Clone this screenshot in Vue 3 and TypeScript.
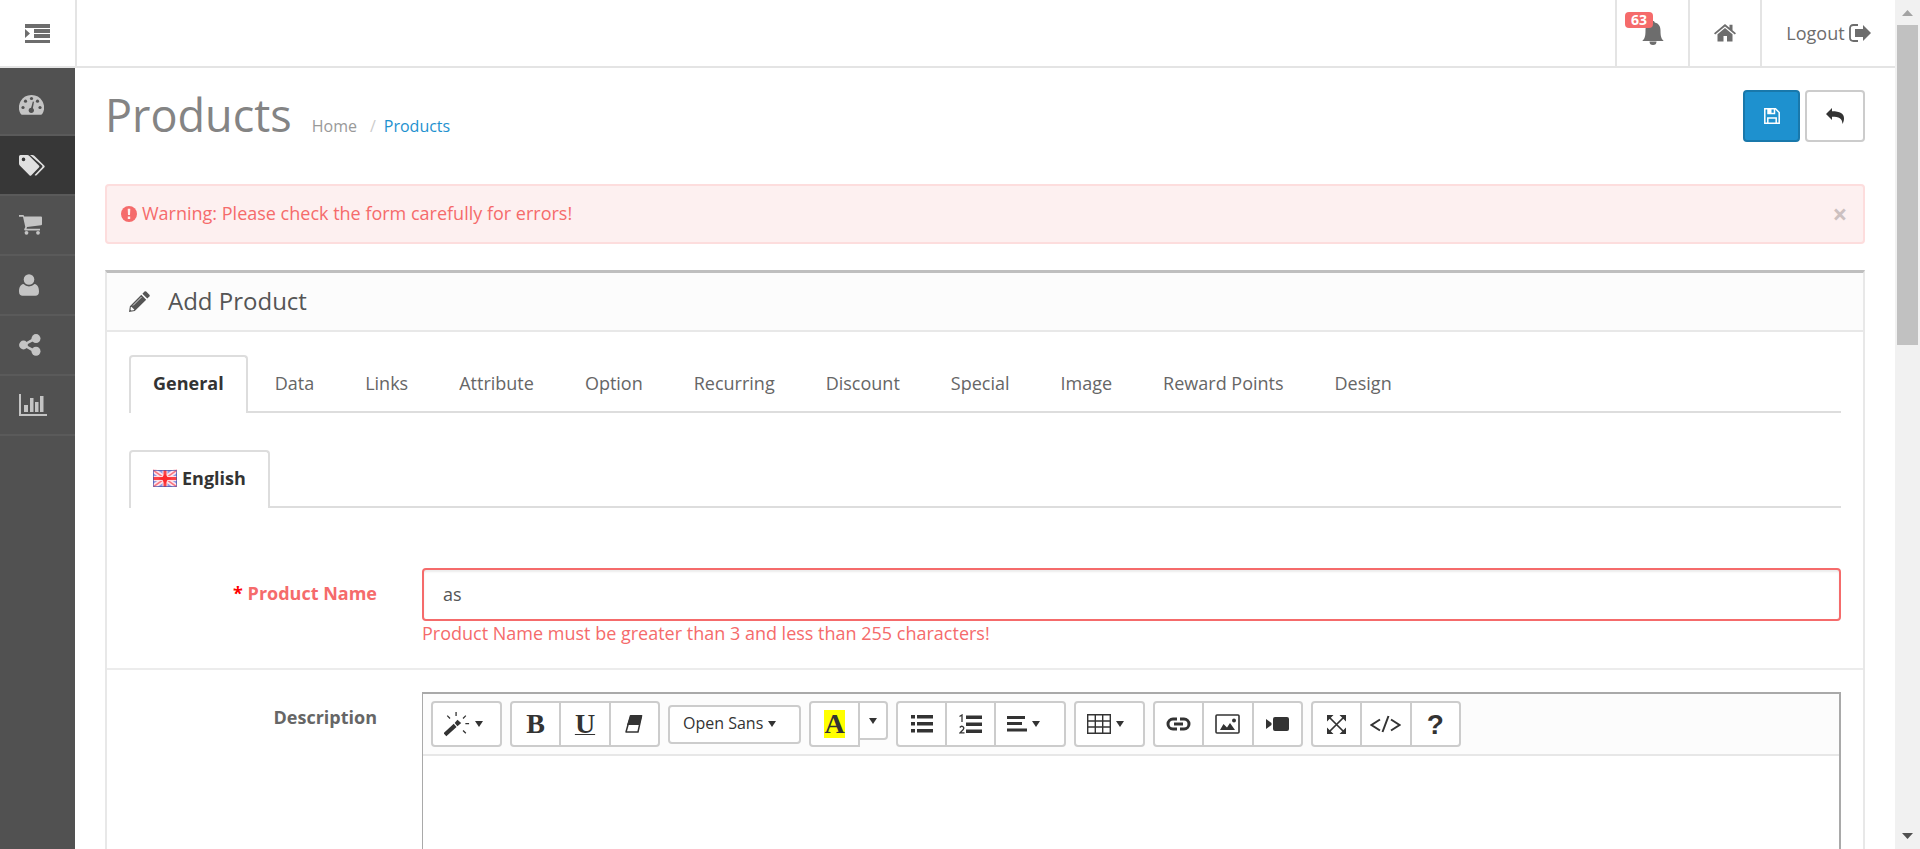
<script setup lang="ts">
import { ref } from 'vue'

interface NavItem { label: string; icon: string }

const nav: NavItem[] = [
  { label: 'Dashboard', icon: 'dashboard' },
  { label: 'Catalog', icon: 'tags' },
  { label: 'Sales', icon: 'cart' },
  { label: 'Customers', icon: 'user' },
  { label: 'Marketing', icon: 'share' },
  { label: 'Reports', icon: 'chart' },
]
const activeNav = ref('Catalog')
const tabs: string[] = ['General', 'Data', 'Links', 'Attribute', 'Option', 'Recurring', 'Discount', 'Special', 'Image', 'Reward Points', 'Design']
const activeTab = ref('General')
const productName = ref('as')
const showAlert = ref(true)
</script>

<template>
  <div class="app">
    <div class="page">
      <header class="topbar">
        <button class="menu-toggle" type="button" aria-label="Toggle menu">
          <svg width="25" height="20" viewBox="0 0 25 20" fill="currentColor"><path d="M0 1h25v4H0zM9 6h16v4H9zM9 11h16v4H9zM0 17h25v3H0zM0 6l5 4.500-5 4.500z" /></svg>
        </button>
        <nav class="top-links" aria-label="Account">
          <a class="top-link bell" href="#" aria-label="Notifications">
            <svg width="24" height="24" viewBox="0 0 24 24" fill="currentColor"><path d="M12 0c1 0 1.700.7 1.700 1.600C18 2.500 19.500 6 19.500 9.500c0 6 .8 8 3.200 10.500H1.300c2.400-2.500 3.200-4.500 3.200-10.500C4.500 6 6 2.500 10.300 1.600 10.300.7 11 0 12 0zM8.500 20.500h7a3.500 3.500 0 0 1-7 0z" /></svg>
            <span class="badge">63</span>
          </a>
          <a class="top-link home" href="#" aria-label="Store front">
            <svg width="22" height="18" viewBox="0 0 22 18" fill="currentColor"><path d="M11 0 0 9.200l1.200 1.400L11 2.500l9.800 8.100L22 9.200l-3.500-3V.7h-3v3zM11 4 3.500 10.200V17.500h6v-5.500h3.500v5.500h5.500v-7.300z" /></svg>
          </a>
          <a class="top-link logout" href="#">Logout
            <svg width="22" height="18" viewBox="0 0 22 18"><path d="M9 1H4.500Q1 1 1 4.500v9Q1 17 4.500 17H9" fill="none" stroke="currentColor" stroke-width="1.800" /><path d="M14 1l8 8-8 8v-4H6V5h8z" fill="currentColor" /></svg>
          </a>
        </nav>
      </header>

      <div class="layout">
        <nav class="sidebar" aria-label="Main">
          <a v-for="item in nav" :key="item.label" href="#" class="nav-item" :class="{ active: item.label === activeNav }" :aria-label="item.label" @click.prevent="activeNav = item.label">
            <svg v-if="item.icon === 'dashboard'" width="25" height="20" viewBox="0 0 25 20"><path fill="currentColor" d="M12.500 0A12.500 12.500 0 0 0 1.800 19q.4.700 1.200.700h19q.8 0 1.200-.700A12.500 12.500 0 0 0 12.500 0z" /><g class="cut"><circle cx="12.500" cy="3.500" r="1.600" /><circle cx="6.500" cy="6.200" r="1.600" /><circle cx="18.500" cy="6.200" r="1.600" /><circle cx="4" cy="12.500" r="1.600" /><circle cx="21" cy="12.500" r="1.600" /><circle cx="12.300" cy="15.300" r="2.600" /><path d="M13.800 6.500l1.200.3-1.400 8h-2z" /></g></svg>
            <svg v-else-if="item.icon === 'tags'" width="26" height="21" viewBox="0 0 26 21"><path fill="currentColor" fill-rule="evenodd" d="M0 1.500Q0 0 1.500 0h6.700q1.300 0 2.200 1l9.500 9.500q1 1 0 2l-7.500 7.700q-1 1-2 0L1 10.700Q0 9.700 0 8.400zM4.500 2.600a1.800 1.800 0 1 0 0 3.600 1.800 1.800 0 0 0 0-3.600z" /><path fill="currentColor" d="M11 0h2.300q1.200 0 2 .8l9.900 9.700q1 1 0 2l-7.600 7.700q-1 .9-2-.2l7.200-7.500q1.200-1 0-2.200z" /></svg>
            <svg v-else-if="item.icon === 'cart'" width="23" height="20" viewBox="0 0 23 20" fill="currentColor"><path d="M0 0h4.200q.8 0 1 1.500H22q1 0 1 1v6.800q0 .8-1 1L8 12l-.5 1.700H21v1.700H6q-1-.2-.8-1.200L6.300 12 4 1.800H0z" /><circle cx="7.500" cy="17.800" r="1.900" /><circle cx="19" cy="17.800" r="1.900" /></svg>
            <svg v-else-if="item.icon === 'user'" width="20" height="22" viewBox="0 0 20 22" fill="currentColor"><circle cx="10" cy="5.500" r="5.300" /><path d="M4.500 10a7.500 7.500 0 0 0 11 0c3.500.5 4.500 4 4.500 7.500 0 3-1.500 4.200-3.500 4.200h-13C1.500 21.700 0 20.500 0 17.500 0 14 1 10.500 4.500 10z" /></svg>
            <svg v-else-if="item.icon === 'share'" width="22" height="22" viewBox="0 0 22 22" fill="currentColor"><path d="M4 10l12-7 1 2.700L7 11l10 5.300-1 2.700L4 12z" /><circle cx="4.500" cy="11" r="4.400" /><circle cx="17" cy="4.600" r="4.500" /><circle cx="17" cy="17.200" r="4.500" /></svg>
            <svg v-else width="28" height="22" viewBox="0 0 28 22" fill="currentColor"><path d="M0 0h2v20h26v2H0zM5 11h4v7H5zM11 4h3.500v14H11zM16 8h3.500v10H16zM21 2h3.500v16H21z" /></svg>
          </a>
        </nav>

        <main class="content">
          <div class="page-header">
            <h1>Products</h1>
            <ol class="breadcrumb">
              <li><a href="#">Home</a></li>
              <li><a href="#" class="current">Products</a></li>
            </ol>
            <div class="actions">
              <button class="btn primary" type="button" aria-label="Save">
                <svg width="16" height="16" viewBox="0 0 16 16" fill="none" stroke="currentColor" stroke-width="1.500"><path d="M.8.800h10.700l3.700 3.700v10.700H.8zM3.800 15v-5h8.400v5" /><path d="M4 1v4.500h6.500V1" /><path d="M4 1h3.500v4H4z" fill="currentColor" stroke="none" /></svg>
              </button>
              <button class="btn" type="button" aria-label="Back">
                <svg width="18" height="16" viewBox="0 0 18 16" fill="currentColor"><path d="M0 6 6 0v3.300c8 0 12 2 12 7.200 0 2-.6 3.700-1.500 5.500C16.300 10.500 13 8.700 6 8.700V12z" /></svg>
              </button>
            </div>
          </div>

          <div v-if="showAlert" class="alert" role="alert">
            <svg width="16" height="16" viewBox="0 0 16 16"><circle cx="8" cy="8" r="8" fill="currentColor" /><path d="M6.700 2.800h2.600L9 9H7zM6.800 10.500h2.400V13H6.800z" fill="#fdf0f0" /></svg>
            <span class="alert-text">Warning: Please check the form carefully for errors!</span>
            <button class="close" type="button" aria-label="Close" @click="showAlert = false">×</button>
          </div>

          <section class="panel">
            <div class="panel-heading">
              <svg width="21" height="21" viewBox="0 0 21 21" fill="currentColor"><path d="M15.500.6q.8-.9 1.700 0l3.200 3.200q.8.900 0 1.700L18.300 7.600 13.400 2.700zM12.300 3.800l4.900 4.900L5.800 20.100 0 21l.9-5.800z" /><path d="M2.400 15.700l2.900 2.900-.7.700-2.300.3-.8-.8.300-2.400z" fill="#fcfcfc" /><path d="M4 14.500l8.500-8.500" stroke="#fcfcfc" stroke-width=".8" /></svg>
              <h3>Add Product</h3>
            </div>
            <form class="panel-body" @submit.prevent>
              <div class="tabs" role="tablist">
                <button v-for="tab in tabs" :key="tab" type="button" role="tab" class="tab" :class="{ active: tab === activeTab }" :aria-selected="tab === activeTab" @click="activeTab = tab">{{ tab }}</button>
              </div>
              <div class="tabs languages" role="tablist">
                <button type="button" role="tab" class="tab active" aria-selected="true">
                  <svg width="24" height="18" viewBox="0 0 24 18"><path fill="#8f9ae4" d="M0 1h24v17H0z" /><path d="M0 1l24 17M24 1L0 18" stroke="#fde4ea" stroke-width="5" /><path d="M0 1l24 17M24 1L0 18" stroke="#f9737f" stroke-width="1.500" /><path d="M12 1v17M0 9.500h24" stroke="#fde0e6" stroke-width="5" /><path d="M12 1v17M0 9.500h24" stroke="#fb4347" stroke-width="3" /><path d="M12 5l2.500 3 4 1.500-4 1.500-2.500 4-2.500-4-4-1.500 4-1.500z" fill="#fb2a2e" /><path d="M.5 1.500h23v16H.5z" fill="none" stroke="#4a51a5" stroke-opacity=".7" /></svg>
                  English
                </button>
              </div>

              <div class="form-row">
                <label class="label error" for="product-name"><span class="required">*</span> Product Name</label>
                <div class="field">
                  <input id="product-name" v-model="productName" type="text" />
                  <div class="help">Product Name must be greater than 3 and less than 255 characters!</div>
                </div>
              </div>

              <div class="form-row description">
                <label class="label" for="product-description">Description</label>
                <div class="editor">
                  <div class="toolbar" role="toolbar" aria-label="Formatting">
                    <div class="group menu">
                      <button type="button" aria-label="Style">
                        <svg width="26" height="26" viewBox="0 0 28 26"><path d="M1 24.500 12 14.500" stroke="currentColor" stroke-width="4.500" /><path d="M14.500 8.500l4 3.500-4 3.500-3-3.500z" fill="currentColor" /><path d="M3.500 4l3 3M13 0v4.500M23.500 4l-3 3M23 12.500h4M20.500 20l3 3" stroke="currentColor" stroke-width="1.400" /></svg>
                        <i class="caret"></i>
                      </button>
                    </div>
                    <div class="group triple">
                      <button type="button" aria-label="Bold"><b class="glyph">B</b></button>
                      <button type="button" aria-label="Underline"><span class="glyph underlined">U</span></button>
                      <button type="button" aria-label="Remove formatting">
                        <svg width="18" height="18" viewBox="0 0 18 18"><path d="M5.500.800h11L13 17H1z" fill="none" stroke="currentColor" stroke-width="1.500" stroke-linejoin="round" /><path d="M5.500.500h11.800L14.500 10H2z" fill="currentColor" /></svg>
                      </button>
                    </div>
                    <div class="group font">
                      <button type="button">Open Sans <i class="caret"></i></button>
                    </div>
                    <div class="color-group">
                      <button type="button" class="color" aria-label="Recent color"><span class="glyph swatch">A</span></button>
                      <button type="button" class="more" aria-label="More colors"><i class="caret"></i></button>
                    </div>
                    <div class="group lists">
                      <button type="button" aria-label="Unordered list">
                        <svg width="22" height="18" viewBox="0 0 22 18" fill="currentColor"><path d="M0 0h4v3.500H0zM6 0h16v3.500H6zM0 7h4v3.500H0zM6 7h16v3.500H6zM0 14h4v3.500H0zM6 14h16v3.500H6z" /></svg>
                      </button>
                      <button type="button" aria-label="Ordered list">
                        <svg width="23" height="20" viewBox="0 0 23 20"><path d="M7 1.500h16V5H7zM7 8.500h16V12H7zM7 15.500h16V19H7z" fill="currentColor" /><path d="M.5 2.500 3 1v7M.8 13.500q1.500-2 3.200-.8t-.2 3.300L1 18.800h4.500" fill="none" stroke="currentColor" stroke-width="1.300" /></svg>
                      </button>
                      <button type="button" class="with-caret" aria-label="Paragraph">
                        <svg width="20" height="16" viewBox="0 0 20 16" fill="currentColor"><path d="M0 0h18v3H0zM0 6h15v3H0zM0 12.500h20v3H0z" /></svg>
                        <i class="caret"></i>
                      </button>
                    </div>
                    <div class="group menu">
                      <button type="button" aria-label="Table">
                        <svg width="24" height="20" viewBox="0 0 24 20" fill="none" stroke="currentColor" stroke-width="1.400"><path d="M.7.700h22.600v18.600H.7zM8.300 1v18M15.700 1v18M1 7h22M1 13h22" /></svg>
                        <i class="caret"></i>
                      </button>
                    </div>
                    <div class="group triple">
                      <button type="button" aria-label="Link">
                        <svg width="25" height="14" viewBox="0 0 25 14" fill="none" stroke="currentColor" stroke-width="3"><path d="M11 2H7a5 5 0 0 0 0 10h4M14 2h4a5 5 0 0 1 0 10h-4M8 7h9" /></svg>
                      </button>
                      <button type="button" aria-label="Picture">
                        <svg width="25" height="20" viewBox="0 0 25 20"><rect x="1" y="1" width="23" height="18" rx="1" fill="none" stroke="currentColor" stroke-width="1.600" /><path d="M5 16l3.500-6 3.500 3.500L15 9l5 7z" fill="currentColor" /><circle cx="19" cy="6.500" r="2" fill="currentColor" /></svg>
                      </button>
                      <button type="button" aria-label="Video">
                        <svg width="23" height="14" viewBox="0 0 23 14" fill="currentColor"><path d="M0 2l5.500 4v2L0 12zM9 0h12q2 0 2 2v10q0 2-2 2H9q-2 0-2-2V2q0-2 2-2z" /></svg>
                      </button>
                    </div>
                    <div class="group triple">
                      <button type="button" aria-label="Full screen">
                        <svg width="19" height="19" viewBox="0 0 19 19"><path d="M2 2l15 15M17 2L2 17" stroke="currentColor" stroke-width="1.700" /><path d="M0 0h6.500L0 6.500zM19 0h-6.500L19 6.500zM0 19h6.500L0 12.500zM19 19h-6.500l6.500-6.500z" fill="currentColor" /></svg>
                      </button>
                      <button type="button" aria-label="Code view">
                        <svg width="31" height="18" viewBox="0 0 31 18" fill="none" stroke="currentColor" stroke-width="2"><path d="M10 4.500 1.500 10 10 15.500M21 4.500l8.500 5.500-8.500 5.500M18.500 1l-6 16" /></svg>
                      </button>
                      <button type="button" aria-label="Help"><span class="question">?</span></button>
                    </div>
                  </div>
                  <textarea id="product-description"></textarea>
                </div>
              </div>
            </form>
          </section>
        </main>
      </div>
    </div>
    <div class="scrollbar" aria-hidden="true">
      <svg width="11" height="6" viewBox="0 0 11 6"><path d="M5.500 0 11 6H0z" fill="#a3a3a3" /></svg>
      <div class="track"><div class="thumb"></div></div>
      <svg width="11" height="6" viewBox="0 0 11 6"><path d="M0 0h11L5.500 6z" fill="#505050" /></svg>
    </div>
  </div>
</template>

<style>
body {
  margin: 0;
  overflow: hidden;
}
</style>

<style scoped>
* {
  box-sizing: border-box;
}
.app {
  display: flex;
  height: 100vh;
  overflow: hidden;
  background: #fff;
  color: #666;
  font-family: 'Open Sans', 'Noto Sans', sans-serif;
  font-size: 18px;
  line-height: 25px;
}
svg {
  display: block;
  flex: none;
}
a {
  color: inherit;
  text-decoration: none;
}
button {
  padding: 0;
  border: 0;
  background: none;
  color: inherit;
  font: inherit;
  cursor: pointer;
}
.page {
  display: flex;
  flex: 1;
  flex-direction: column;
  min-width: 0;
}
.topbar {
  display: flex;
  flex: none;
  justify-content: space-between;
  height: 68px;
  border-bottom: 2px solid #e4e4e4;
  color: #6d6d6d;
}
.menu-toggle {
  display: flex;
  align-items: center;
  justify-content: center;
  width: 77px;
  border-right: 2px solid #e4e4e4;
}
.top-links {
  display: flex;
}
.top-link {
  display: flex;
  align-items: center;
  justify-content: center;
  width: 72px;
  border-left: 2px solid #e4e4e4;
}
.top-link.bell {
  position: relative;
  width: 73px;
}
.badge {
  position: absolute;
  top: 12px;
  left: 8px;
  width: 28px;
  border-radius: 4px;
  background: #f56b6b;
  color: #fff;
  font-size: 14px;
  font-weight: 700;
  line-height: 16px;
  text-align: center;
}
.top-link.logout {
  gap: 4px;
  width: 135px;
}
.layout {
  display: flex;
  flex: 1;
  min-height: 0;
}
.sidebar {
  display: flex;
  flex: none;
  flex-direction: column;
  width: 75px;
  padding-top: 8px;
  background: #515151;
  color: #c4c4c4;
}
.nav-item {
  display: flex;
  align-items: center;
  height: 60px;
  padding-left: 19px;
  border-bottom: 2px solid #5a5a5a;
}
.nav-item.active {
  background: #373737;
  color: #e0e0e0;
}
.cut {
  fill: #515151;
}
.content {
  flex: 1;
  min-width: 0;
  padding: 22px 30px 0;
}
.page-header {
  display: flex;
  align-items: baseline;
  height: 52px;
  margin-bottom: 42px;
}
h1,
h3 {
  margin: 0;
  font-weight: 400;
}
h1 {
  color: #848484;
  font-size: 45px;
  line-height: 50px;
}
.breadcrumb {
  display: flex;
  margin: 0 0 0 20px;
  padding: 0;
  color: #999;
  font-size: 16px;
  list-style: none;
}
.breadcrumb li + li::before {
  padding: 0 8px 0 13px;
  color: #ccc;
  content: '/';
}
.current {
  color: #1e91cf;
}
.actions {
  display: flex;
  align-self: flex-start;
  gap: 5px;
  margin-left: auto;
}
.btn {
  display: flex;
  align-items: center;
  justify-content: center;
  width: 60px;
  height: 52px;
  border: 2px solid #ccc;
  border-radius: 4px;
  color: #333;
}
.btn.primary {
  width: 57px;
  border-color: #1978ab;
  background: #1e91cf;
  color: #fff;
}
.alert {
  display: flex;
  align-items: center;
  gap: 5px;
  height: 60px;
  margin-bottom: 26px;
  padding: 0 13px 0 14px;
  border: 2px solid #fddddd;
  border-radius: 4px;
  background: #fdf0f0;
  color: #f56b6b;
}
.alert-text {
  padding-bottom: 2px;
}
.close {
  width: 20px;
  margin-left: auto;
  color: #ccc0c0;
  font-size: 26px;
  font-weight: 700;
}
.panel {
  border: 2px solid #e8e8e8;
  border-top: 3px solid #bfbfbf;
}
.panel-heading {
  display: flex;
  align-items: center;
  gap: 18px;
  height: 59px;
  padding: 0 22px;
  border-bottom: 2px solid #e8e8e8;
  background: #fcfcfc;
  color: #555;
}
.panel-heading h3 {
  padding-bottom: 2px;
  font-size: 24px;
}
.panel-body {
  padding: 23px 22px 0;
}
.tabs {
  display: flex;
  margin-bottom: 37px;
  border-bottom: 2px solid #ddd;
}
.tab {
  display: flex;
  align-items: center;
  gap: 5px;
  height: 56px;
  margin-right: 3px;
  padding: 0 22px 2px;
  border: 2px solid transparent;
  border-bottom: 0;
}
.tab.active {
  height: 58px;
  margin-bottom: -2px;
  padding-bottom: 4px;
  border-color: #ddd;
  border-radius: 4px 4px 0 0;
  background: #fff;
  color: #333;
  font-weight: 700;
}
.languages {
  margin-bottom: 38px;
}
.form-row {
  display: grid;
  grid-template-columns: 248px minmax(0, 1fr);
  column-gap: 45px;
  margin: 0 -22px;
  padding: 22px 22px;
}
.description {
  border-top: 2px solid #ececec;
}
.label {
  padding-top: 13px;
  font-weight: 700;
  text-align: right;
}
.label.error,
.help {
  color: #f56b6b;
}
.required {
  color: #f00;
}
input {
  display: block;
  width: 100%;
  height: 53px;
  padding: 0 19px 2px;
  border: 2px solid #f56b6b;
  border-radius: 4px;
  outline: 0;
  box-shadow: inset 0 2px 2px rgb(0 0 0 / 8%);
  color: #555;
  font: inherit;
}
.editor {
  border: 2px solid #a9a9a9;
  border-left-width: 1px;
}
.toolbar {
  display: flex;
  align-items: flex-start;
  gap: 8px;
  height: 62px;
  padding: 7px 8px;
  border-bottom: 2px solid #e7e7e7;
  background: #fcfcfc;
  color: #333;
}
.group {
  display: flex;
  height: 46px;
  border: 2px solid #ccc;
  border-radius: 4px;
  background: #fff;
}
.group button {
  display: flex;
  flex: 1;
  align-items: center;
  justify-content: center;
  gap: 5px;
}
.group button + button {
  border-left: 2px solid #ccc;
}
.menu {
  width: 71px;
}
.group.menu button {
  justify-content: flex-start;
  padding-left: 11px;
}
.triple {
  width: 150px;
}
.lists {
  width: 170px;
}
.lists .with-caret {
  flex: 0 0 70px;
  justify-content: flex-start;
  padding-left: 11px;
}
.font {
  width: 133px;
  height: 39px;
  margin-top: 4px;
  font-size: 16px;
}
.font button {
  justify-content: flex-start;
  padding: 0 0 2px 13px;
}
.color-group {
  display: flex;
  align-items: flex-start;
}
.color-group button {
  display: flex;
  align-items: center;
  justify-content: center;
  border: 2px solid #ccc;
  background: #fff;
}
.color-group .color {
  width: 51px;
  height: 46px;
  border-radius: 4px 0 0 4px;
}
.color-group .more {
  width: 28px;
  height: 39px;
  border-left: 0;
  border-radius: 0 4px 4px 0;
}
.caret {
  width: 0;
  height: 0;
  border: 4px solid transparent;
  border-top: 6px solid #333;
  border-bottom: 0;
}
.glyph {
  font-family: 'Liberation Serif', serif;
  font-size: 28px;
  font-weight: 700;
  line-height: 28px;
}
.underlined {
  text-decoration: underline;
  text-decoration-thickness: 1px;
}
.swatch {
  background: #ff0;
}
.question {
  font-family: 'Liberation Sans', sans-serif;
  font-size: 28px;
  font-weight: 700;
}
textarea {
  display: block;
  width: 100%;
  height: 300px;
  padding: 15px;
  border: 0;
  outline: 0;
  resize: none;
  font: inherit;
}
.scrollbar {
  display: flex;
  flex: none;
  flex-direction: column;
  align-items: center;
  width: 25px;
  padding: 10px 0;
  background: #f1f1f1;
}
.track {
  flex: 1;
  width: 21px;
  padding: 9px 0;
}
.thumb {
  height: 40%;
  background: #c1c1c1;
}
</style>
